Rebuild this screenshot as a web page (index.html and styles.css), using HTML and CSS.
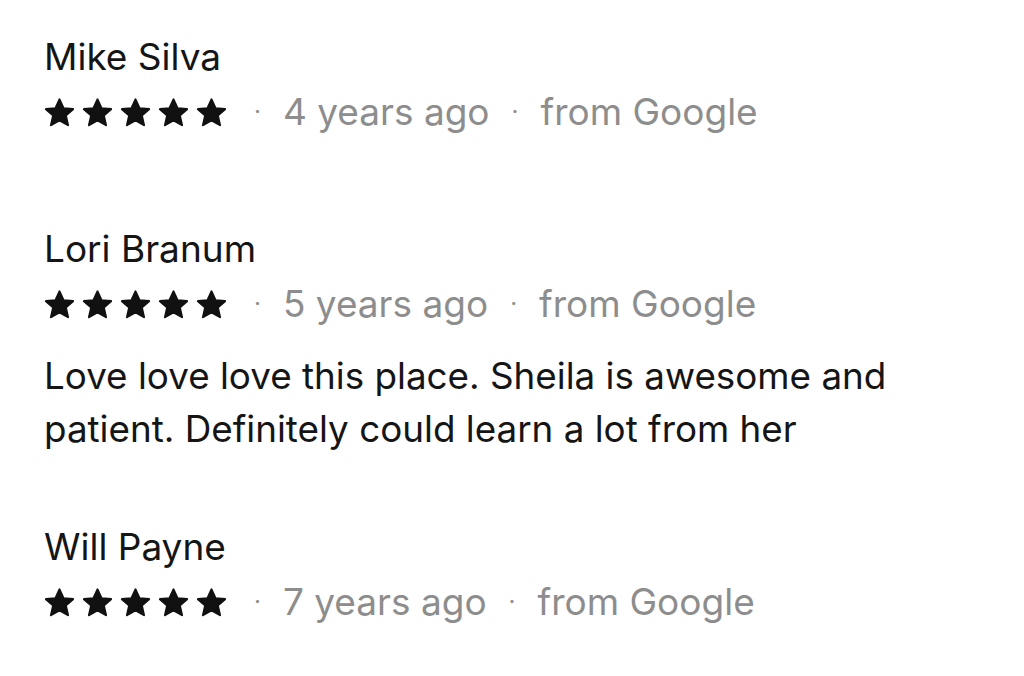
FILE: index.html
```html
<!DOCTYPE html>
<html lang="en">
<head>
    <meta charset="UTF-8">
    <title>Reviews</title>
    <link rel="stylesheet" href="styles.css">
</head>
<body>

<svg width="0" height="0" class="defs">
    <symbol id="star" viewBox="0 0 24 24">
        <path d="M12 1.8l3.1 6.9 7.4.7-5.6 5 1.7 7.4L12 18l-6.6 3.8 1.7-7.4-5.6-5 7.4-.7z" stroke-linejoin="round"/>
    </symbol>
</svg>

<div class="reviews">
    <div class="review">
        <div class="name">Mike Silva</div>
        <div class="meta">
            <span class="stars">
                <svg><use href="#star"/></svg><svg><use href="#star"/></svg><svg><use href="#star"/></svg><svg><use href="#star"/></svg><svg><use href="#star"/></svg>
            </span>
            <span class="dot">·</span>
            <span>4 years ago</span>
            <span class="dot">·</span>
            <span>from Google</span>
        </div>
    </div>

    <div class="review">
        <div class="name">Lori Branum</div>
        <div class="meta">
            <span class="stars">
                <svg><use href="#star"/></svg><svg><use href="#star"/></svg><svg><use href="#star"/></svg><svg><use href="#star"/></svg><svg><use href="#star"/></svg>
            </span>
            <span class="dot">·</span>
            <span>5 years ago</span>
            <span class="dot">·</span>
            <span>from Google</span>
        </div>
        <p class="text">Love love love this place. Sheila is awesome and patient. Definitely could learn a lot from her</p>
    </div>

    <div class="review">
        <div class="name">Will Payne</div>
        <div class="meta">
            <span class="stars">
                <svg><use href="#star"/></svg><svg><use href="#star"/></svg><svg><use href="#star"/></svg><svg><use href="#star"/></svg><svg><use href="#star"/></svg>
            </span>
            <span class="dot">·</span>
            <span>7 years ago</span>
            <span class="dot">·</span>
            <span>from Google</span>
        </div>
    </div>
</div>

</body>
</html>
```

FILE: styles.css
```css
body {
    margin: 0;
    background: #fff;
    font-family: Inter, "Noto Sans", sans-serif;
    color: #151515;
}
.defs {
    position: absolute;
}
.reviews {
    padding: 36px 44px;
    display: flex;
    flex-direction: column;
    gap: 71px;
}
.name {
    font-size: 37px;
    line-height: 42px;
}
.meta {
    display: flex;
    align-items: center;
    gap: 22px;
    margin: 12px 0 23px;
    font-size: 37px;
    line-height: 44px;
    color: #8d8d8d;
}
.stars {
    display: flex;
    gap: 7px;
    margin-right: 5px;
}
.stars svg {
    width: 31px;
    height: 31px;
    fill: #111;
    stroke: #111;
    stroke-width: 1.6;
}
.dot {
    font-size: 24px;
}
.text {
    margin: 13px 0 0;
    max-width: 900px;
    font-size: 36.8px;
    line-height: 53px;
}
```
